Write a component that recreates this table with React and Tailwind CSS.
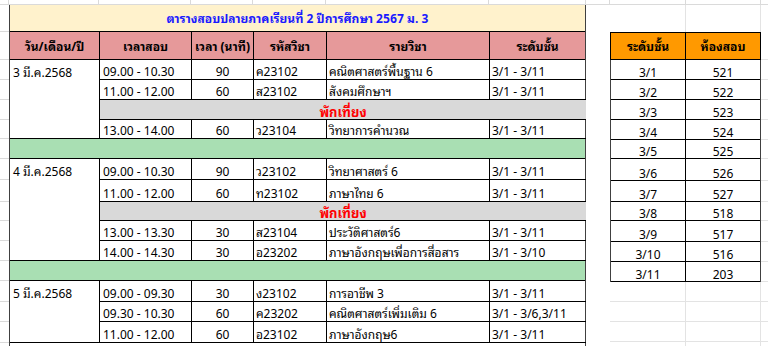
import React from "react";

const day1 = {
  date: "3 มี.ค.2568",
  rows: [
    { h: "h-[20px]", d: ["09.00 - 10.30", "90", "ค23102", "คณิตศาสตร์พื้นฐาน 6", "3/1 - 3/11"] },
    { h: "h-[20px]", d: ["11.00 - 12.00", "60", "ส23102", "สังคมศึกษาฯ", "3/1 - 3/11"] },
    { h: "h-[20px]", lunch: true },
    { h: "h-[19px]", d: ["13.00 - 14.00", "60", "ว23104", "วิทยาการคำนวณ", "3/1 - 3/11"] },
  ],
};
const day2 = {
  date: "4 มี.ค.2568",
  rows: [
    { h: "h-[21px]", d: ["09.00 - 10.30", "90", "ว23102", "วิทยาศาสตร์ 6", "3/1 - 3/11"] },
    { h: "h-[22px]", d: ["11.00 - 12.00", "60", "ท23102", "ภาษาไทย 6", "3/1 - 3/11"] },
    { h: "h-[19px]", lunch: true },
    { h: "h-[20px]", d: ["13.00 - 13.30", "30", "ส23104", "ประวัติศาสตร์6", "3/1 - 3/11"] },
    { h: "h-[20px]", d: ["14.00 - 14.30", "30", "อ23202", "ภาษาอังกฤษเพื่อการสื่อสาร", "3/1 - 3/10"] },
  ],
};
const day3 = {
  date: "5 มี.ค.2568",
  rows: [
    { h: "h-[21px]", d: ["09.00 - 09.30", "30", "ง23102", "การอาชีพ 3", "3/1 - 3/11"] },
    { h: "h-[20px]", d: ["09.30 - 10.30", "60", "ค23202", "คณิตศาสตร์เพิ่มเติม 6", "3/1 - 3/6,3/11"] },
    { h: "h-[21px]", d: ["11.00 - 12.00", "60", "อ23102", "ภาษาอังกฤษ6", "3/1 - 3/11"] },
  ],
};

const rooms = [
  { h: "h-[20px]", l: "3/1", r: "521" },
  { h: "h-[20px]", l: "3/2", r: "522" },
  { h: "h-[20px]", l: "3/3", r: "523" },
  { h: "h-[20px]", l: "3/4", r: "524" },
  { h: "h-[19px]", l: "3/5", r: "525" },
  { h: "h-[22px]", l: "3/6", r: "526" },
  { h: "h-[21px]", l: "3/7", r: "527" },
  { h: "h-[19px]", l: "3/8", r: "518" },
  { h: "h-[21px]", l: "3/9", r: "517" },
  { h: "h-[20px]", l: "3/10", r: "516" },
  { h: "h-[20px]", l: "3/11", r: "203" },
];

const leftGutterRows = [
  "h-[27px]", "h-[28px]", "h-[20px]", "h-[20px]", "h-[20px]", "h-[19px]", "h-[20px]",
  "h-[21px]", "h-[22px]", "h-[19px]", "h-[20px]", "h-[20px]", "h-[20px]",
  "h-[21px]", "h-[20px]", "h-[21px]",
];

function DataRow({ row }) {
  if (row.lunch) {
    return (
      <div className={`${row.h} flex items-end justify-center bg-[#d9d9d9] border-b border-black text-[13px] font-bold text-[#ff0000] leading-none pb-[1px]`}>
        พักเที่ยง
      </div>
    );
  }
  const [t, m, c, s, l] = row.d;
  return (
    <div className={`${row.h} flex border-b border-black text-[12px] leading-none`}>
      <div className="w-[92px] shrink-0 border-r border-black flex items-end pl-[3px] pb-[2px]">{t}</div>
      <div className="w-[62px] shrink-0 border-r border-black flex items-end justify-center pb-[2px]">{m}</div>
      <div className="w-[73px] shrink-0 border-r border-black flex items-end pl-[2px] pb-[2px]">{c}</div>
      <div className="w-[163px] shrink-0 border-r border-black flex items-end pl-[2px] pb-[2px] whitespace-nowrap">{s}</div>
      <div className="w-[96px] shrink-0 flex items-end pl-[2px] pb-[2px] whitespace-nowrap">{l}</div>
    </div>
  );
}

function DayBlock({ day }) {
  return (
    <div className="flex">
      <div className="w-[90px] shrink-0 border-r border-b border-black pl-[3px] pt-[6px] text-[12px] leading-none">
        {day.date}
      </div>
      <div className="flex flex-col flex-1">
        {day.rows.map((r, i) => (
          <DataRow key={i} row={r} />
        ))}
      </div>
    </div>
  );
}

function GreenRow() {
  return <div className="h-[20px] bg-[#a9dfb3] border-b border-black" />;
}

export default function App() {
  return (
    <div className="w-[768px] h-[346px] overflow-hidden bg-white text-black font-['Tahoma','Noto_Sans_Thai_Looped','Noto_Sans_Thai','Noto_Sans','DejaVu_Sans',sans-serif]">
      {/* top strip of sheet gridlines */}
      <div className="h-[5px] flex border-b border-[#dadada]">
        <div className="w-[9px] shrink-0 border-r border-[#dadada]" />
        <div className="w-[90px] shrink-0 border-r border-[#dadada]" />
        <div className="w-[92px] shrink-0 border-r border-[#dadada]" />
        <div className="w-[62px] shrink-0 border-r border-[#dadada]" />
        <div className="w-[73px] shrink-0 border-r border-[#dadada]" />
        <div className="w-[163px] shrink-0 border-r border-[#dadada]" />
        <div className="w-[97px] shrink-0 border-r border-[#dadada]" />
        <div className="w-[24px] shrink-0 border-r border-[#dadada]" />
        <div className="w-[76px] shrink-0 border-r border-[#dadada]" />
        <div className="w-[75px] shrink-0 border-r border-[#dadada]" />
        <div className="flex-1" />
      </div>

      <div className="flex">
        {/* left gutter */}
        <div className="w-[9px] shrink-0 flex flex-col">
          {leftGutterRows.map((h, i) => (
            <div key={i} className={`${h} border-b border-[#dadada]`} />
          ))}
        </div>

        {/* main table */}
        <div className="w-[577px] shrink-0 flex flex-col border-l border-r border-[#404040]">
          <div className="h-[27px] bg-[#fff2cc] border-b border-black flex items-center justify-center text-[12px] font-bold text-[#1a1aff]">
            ตารางสอบปลายภาคเรียนที่ 2 ปีการศึกษา 2567 ม. 3
          </div>
          <div className="h-[28px] flex bg-[#e6999a] border-b border-black text-[12px] font-bold">
            <div className="w-[90px] shrink-0 border-r border-black flex items-center justify-center">วัน/เดือน/ปี</div>
            <div className="w-[92px] shrink-0 border-r border-black flex items-center justify-center">เวลาสอบ</div>
            <div className="w-[62px] shrink-0 border-r border-black flex items-center justify-center whitespace-nowrap">เวลา (นาที)</div>
            <div className="w-[73px] shrink-0 border-r border-black flex items-center justify-center">รหัสวิชา</div>
            <div className="w-[163px] shrink-0 border-r border-black flex items-center justify-center">รายวิชา</div>
            <div className="flex-1 flex items-center justify-center">ระดับชั้น</div>
          </div>
          <DayBlock day={day1} />
          <GreenRow />
          <DayBlock day={day2} />
          <GreenRow />
          <DayBlock day={day3} />
        </div>

        {/* right region */}
        <div className="flex-1 flex flex-col">
          <div className="h-[27px] flex">
            <div className="w-[100px] shrink-0 border-r border-[#e3e3e3]" />
            <div className="w-[75px] shrink-0 border-r border-[#e3e3e3]" />
          </div>
          <div className="flex">
            <div className="w-[24px] shrink-0" />
            <div className="w-[151px] shrink-0 flex flex-col">
              <div className="h-[28px] flex bg-[#ff9900] border border-black text-[12px] font-bold">
                <div className="w-[75px] shrink-0 border-r border-black flex items-center justify-center">ระดับชั้น</div>
                <div className="flex-1 flex items-center justify-center">ห้องสอบ</div>
              </div>
              <div className="flex flex-col border-l border-r border-[#404040] text-[12px] leading-none">
                {rooms.map((r, i) => (
                  <div key={i} className={`${r.h} flex border-b border-black`}>
                    <div className="w-[75px] shrink-0 border-r border-black flex items-end justify-center pb-[1px]">{r.l}</div>
                    <div className="flex-1 flex items-end justify-center pb-[1px]">{r.r}</div>
                  </div>
                ))}
              </div>
              {["h-[20px]", "h-[20px]", "h-[20px]", "h-[20px]"].map((h, i) => (
                <div key={i} className={`${h} flex border-b border-[#e3e3e3]`}>
                  <div className="w-[76px] shrink-0 border-r border-[#e3e3e3]" />
                  <div className="flex-1 border-r border-[#e3e3e3]" />
                </div>
              ))}
            </div>
            <div className="flex-1 flex flex-col">
              {["h-[28px]", "h-[20px]", "h-[20px]", "h-[20px]", "h-[20px]", "h-[19px]", "h-[22px]", "h-[21px]", "h-[19px]", "h-[21px]", "h-[20px]", "h-[20px]", "h-[20px]", "h-[20px]", "h-[20px]"].map((h, i) => (
                <div key={i} className={`${h} border-b border-[#e3e3e3]`} />
              ))}
            </div>
          </div>
        </div>
      </div>
    </div>
  );
}
